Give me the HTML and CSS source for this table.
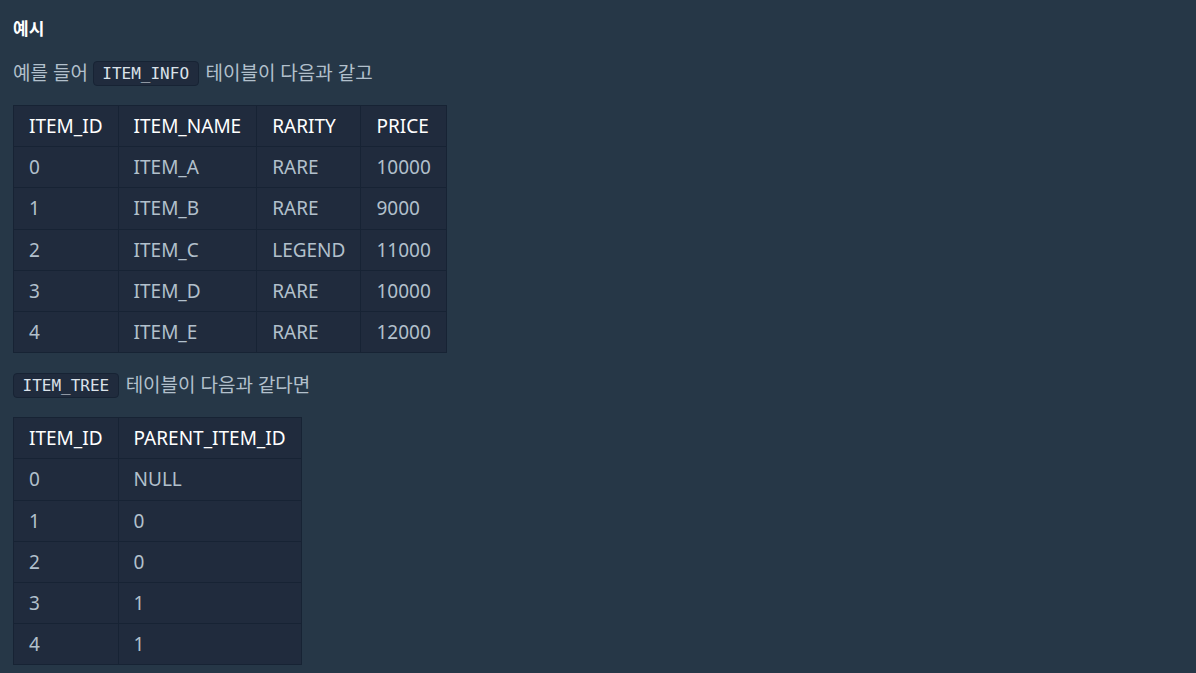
FILE: index.html
```
<!DOCTYPE html>
<html lang="ko">

<head>
  <meta charset="UTF-8">
  <meta name="viewport" content="width=device-width, initial-scale=1.0">
  <title>예시</title>
  <link rel="stylesheet" href="styles.css">
</head>

<body>
  <div class="guide">
    <h5>예시</h5>
    <p>예를 들어 <code>ITEM_INFO</code> 테이블이 다음과 같고</p>
    <table>
      <thead>
        <tr><th>ITEM_ID</th><th>ITEM_NAME</th><th>RARITY</th><th>PRICE</th></tr>
      </thead>
      <tbody>
        <tr><td>0</td><td>ITEM_A</td><td>RARE</td><td>10000</td></tr>
        <tr><td>1</td><td>ITEM_B</td><td>RARE</td><td>9000</td></tr>
        <tr><td>2</td><td>ITEM_C</td><td>LEGEND</td><td>11000</td></tr>
        <tr><td>3</td><td>ITEM_D</td><td>RARE</td><td>10000</td></tr>
        <tr><td>4</td><td>ITEM_E</td><td>RARE</td><td>12000</td></tr>
      </tbody>
    </table>
    <p><code>ITEM_TREE</code> 테이블이 다음과 같다면</p>
    <table>
      <thead>
        <tr><th>ITEM_ID</th><th>PARENT_ITEM_ID</th></tr>
      </thead>
      <tbody>
        <tr><td>0</td><td>NULL</td></tr>
        <tr><td>1</td><td>0</td></tr>
        <tr><td>2</td><td>0</td></tr>
        <tr><td>3</td><td>1</td></tr>
        <tr><td>4</td><td>1</td></tr>
      </tbody>
    </table>
  </div>
</body>

</html>
```

FILE: styles.css
```
html,
body {
  margin: 0;
  background: #263747;
  font-family: "Noto Sans", "Noto Sans CJK KR", sans-serif;
}

.guide {
  padding: 15px 13px;
  color: #b2c0cc;
}

h5 {
  margin: 0 0 15px;
  font-size: 17px;
  line-height: 28px;
  font-weight: bold;
  color: #ffffff;
}

p {
  margin: 0 0 17px;
  font-size: 19px;
  line-height: 30px;
}

code {
  display: inline-block;
  margin: 0 2px;
  padding: 0 8.5px;
  font-family: "DejaVu Sans Mono", monospace;
  font-size: 16px;
  line-height: 23px;
  vertical-align: 1px;
  color: #dbe2ea;
  background: #202b3d;
  border: 1px solid #172334;
  border-radius: 4px;
}

p code:first-child {
  margin-left: 0;
}

table {
  border-collapse: collapse;
  background: #202b3d;
  margin-bottom: 17px;
}

th,
td {
  border: 1px solid #172334;
  padding: 5px 15px;
  line-height: 30.2px;
  font-size: 19px;
  text-align: left;
  font-weight: normal;
}

th {
  color: #ffffff;
}
```
